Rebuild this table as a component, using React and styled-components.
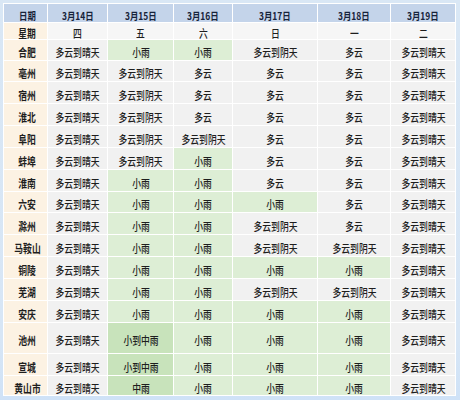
import React from "react";
import styled, { createGlobalStyle } from "styled-components";

const Global = createGlobalStyle`
  html, body { margin: 0; padding: 0; }
  body {
    width: 460px; height: 400px; overflow: hidden;
    background: linear-gradient(180deg, #d9e7f5 0%, #d7e6f6 85%, #cfe2f7 100%);
    font-family: "Noto Sans CJK SC", "Noto Sans", sans-serif;
  }
`;

const Page = styled.div`
  padding: 3px 5px 0 3px;
`;

const Table = styled.table`
  border-collapse: collapse;
  table-layout: fixed;
  width: 452px;
`;

const bgFor = (tone) =>
  ({
    head: "#c4d4ea",
    city: "#fcf2e3",
    week: "#f6f6f6",
    grey: "#f1f1f1",
    rain: "#ddeed5",
    heavy: "#c8e3bb",
  }[tone] || "#f1f1f1");

const Cell = styled.td`
  border: 1px solid #ffffff;
  padding: 0 0 0 ${(p) => (p.$first ? 3 : 0)}px;
  height: ${(p) => p.$h - 1}px;
  background: ${(p) => bgFor(p.$tone)};
  text-align: center;
  vertical-align: middle;
  color: ${(p) => (p.$tone === "head" ? "#17233a" : "#1e1e1e")};
  font-weight: ${(p) => (p.$tone === "head" || p.$tone === "city" ? 700 : 500)};
  line-height: 1;
  white-space: nowrap;
  overflow: hidden;
`;

const Txt = styled.span`
  display: inline-block;
  font-size: ${(p) => (p.$head ? 10.5 : 11)}px;
  transform: scaleX(0.8);
  transform-origin: center;
  letter-spacing: 0;
`;

const cols = [44, 60, 66, 59, 85, 73, 65];

const rows = [
  ["合肥", 21, "多云到晴天", "小雨", "小雨", "多云到阴天", "多云", "多云到晴天"],
  ["亳州", 21, "多云到晴天", "多云到阴天", "多云", "多云", "多云", "多云到晴天"],
  ["宿州", 22, "多云到晴天", "多云到阴天", "多云", "多云", "多云", "多云到晴天"],
  ["淮北", 22, "多云到晴天", "多云到阴天", "多云", "多云", "多云", "多云到晴天"],
  ["阜阳", 22, "多云到晴天", "多云到阴天", "多云到阴天", "多云", "多云", "多云到晴天"],
  ["蚌埠", 22, "多云到晴天", "多云到阴天", "小雨", "多云", "多云", "多云到晴天"],
  ["淮南", 22, "多云到晴天", "小雨", "小雨", "多云", "多云", "多云到晴天"],
  ["六安", 21, "多云到晴天", "小雨", "小雨", "小雨", "多云", "多云到晴天"],
  ["滁州", 22, "多云到晴天", "小雨", "小雨", "多云到阴天", "多云", "多云到晴天"],
  ["马鞍山", 22, "多云到晴天", "小雨", "小雨", "多云到阴天", "多云到阴天", "多云到晴天"],
  ["铜陵", 22, "多云到晴天", "小雨", "小雨", "小雨", "小雨", "多云到晴天"],
  ["芜湖", 22, "多云到晴天", "小雨", "小雨", "多云到阴天", "多云到阴天", "多云到晴天"],
  ["安庆", 22, "多云到晴天", "小雨", "小雨", "小雨", "小雨", "多云到晴天"],
  ["池州", 31, "多云到晴天", "小到中雨", "小雨", "小雨", "小雨", "多云到晴天"],
  ["宣城", 22, "多云到晴天", "小到中雨", "小雨", "小雨", "小雨", "多云到晴天"],
  ["黄山市", 20, "多云到晴天", "中雨", "小雨", "小雨", "小雨", "多云到晴天"],
];

const toneOf = (w) => {
  if (w === "小到中雨" || w === "中雨") return "heavy";
  if (w === "小雨") return "rain";
  return "grey";
};

const dates = ["3月14日", "3月15日", "3月16日", "3月17日", "3月18日", "3月19日"];
const weekdays = ["四", "五", "六", "日", "一", "二"];

export default function App() {
  return (
    <>
      <Global />
      <Page>
        <Table>
          <colgroup>
            {cols.map((w, i) => (
              <col key={i} style={{ width: w }} />
            ))}
          </colgroup>
          <tbody>
            <tr>
              <Cell $tone="head" $h={19} $first>
                <Txt $head>日期</Txt>
              </Cell>
              {dates.map((d) => (
                <Cell key={d} $tone="head" $h={19}>
                  <Txt $head>{d}</Txt>
                </Cell>
              ))}
            </tr>
            <tr>
              <Cell $tone="city" $h={14} $first>
                <Txt>星期</Txt>
              </Cell>
              {weekdays.map((d) => (
                <Cell key={d} $tone="week" $h={14}>
                  <Txt>{d}</Txt>
                </Cell>
              ))}
            </tr>
            {rows.map(([city, h, ...ws]) => (
              <tr key={city}>
                <Cell $tone="city" $h={h} $first>
                  <Txt>{city}</Txt>
                </Cell>
                {ws.map((w, i) => (
                  <Cell key={i} $tone={toneOf(w)} $h={h}>
                    <Txt>{w}</Txt>
                  </Cell>
                ))}
              </tr>
            ))}
          </tbody>
        </Table>
      </Page>
    </>
  );
}
